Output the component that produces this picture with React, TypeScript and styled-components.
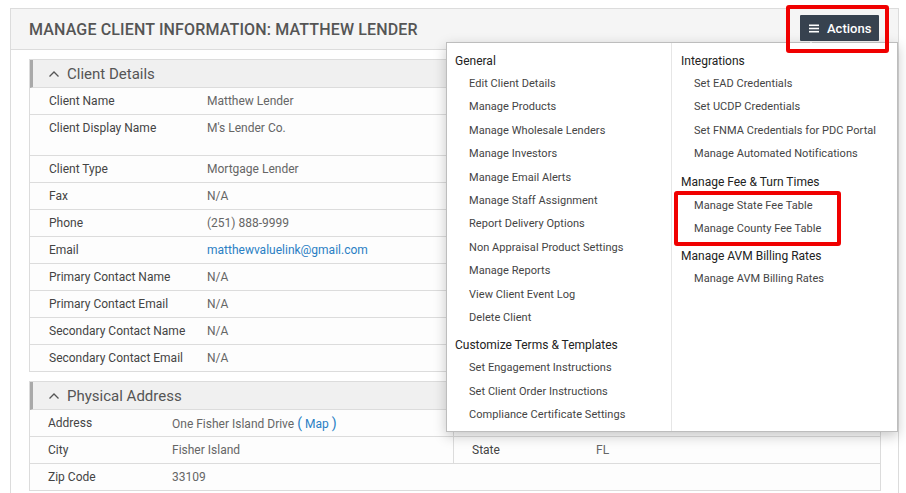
import styled, { createGlobalStyle } from "styled-components";

const GlobalStyle = createGlobalStyle`
  body {
    margin: 0;
    background: #ffffff;
    font-family: Roboto, "Liberation Sans", Arial, sans-serif;
  }
`;

type Field = { label: string; value: string; tall?: boolean; link?: boolean };

const clientFields: Field[] = [
  { label: "Client Name", value: "Matthew Lender" },
  { label: "Client Display Name", value: "M's Lender Co.", tall: true },
  { label: "Client Type", value: "Mortgage Lender" },
  { label: "Fax", value: "N/A" },
  { label: "Phone", value: "(251) 888-9999" },
  { label: "Email", value: "matthewvaluelink@gmail.com", link: true },
  { label: "Primary Contact Name", value: "N/A" },
  { label: "Primary Contact Email", value: "N/A" },
  { label: "Secondary Contact Name", value: "N/A" },
  { label: "Secondary Contact Email", value: "N/A" },
];

type MenuGroup = { title: string; items: string[]; highlight?: boolean };

const leftMenu: MenuGroup[] = [
  {
    title: "General",
    items: [
      "Edit Client Details",
      "Manage Products",
      "Manage Wholesale Lenders",
      "Manage Investors",
      "Manage Email Alerts",
      "Manage Staff Assignment",
      "Report Delivery Options",
      "Non Appraisal Product Settings",
      "Manage Reports",
      "View Client Event Log",
      "Delete Client",
    ],
  },
  {
    title: "Customize Terms & Templates",
    items: [
      "Set Engagement Instructions",
      "Set Client Order Instructions",
      "Compliance Certificate Settings",
    ],
  },
];

const rightMenu: MenuGroup[] = [
  {
    title: "Integrations",
    items: [
      "Set EAD Credentials",
      "Set UCDP Credentials",
      "Set FNMA Credentials for PDC Portal",
      "Manage Automated Notifications",
    ],
  },
  {
    title: "Manage Fee & Turn Times",
    items: ["Manage State Fee Table", "Manage County Fee Table"],
    highlight: true,
  },
  { title: "Manage AVM Billing Rates", items: ["Manage AVM Billing Rates"] },
];

const Chevron = () => (
  <svg width="12" height="8" viewBox="0 0 12 8">
    <polyline points="1.5,6.5 6,2 10.5,6.5" fill="none" stroke="#555" strokeWidth="1.3" />
  </svg>
);

const MenuColumnView = ({ groups, side }: { groups: MenuGroup[]; side: "left" | "right" }) => (
  <MenuColumn side={side}>
    {groups.map((g) => (
      <MenuSection key={g.title}>
        <MenuHeading>{g.title}</MenuHeading>
        {g.highlight ? (
          <Highlight>
            {g.items.map((it) => (
              <MenuItem key={it} side={side}>{it}</MenuItem>
            ))}
          </Highlight>
        ) : (
          g.items.map((it) => <MenuItem key={it} side={side}>{it}</MenuItem>)
        )}
      </MenuSection>
    ))}
  </MenuColumn>
);

export default function App() {
  return (
    <>
      <GlobalStyle />
      <Page>
        <Panel>
          <PanelHeader>
            <Title>Manage Client Information: Matthew Lender</Title>
            <ActionsWrap>
              <ActionsButton>
                <svg width="10" height="9" viewBox="0 0 10 9">
                  <rect x="0" y="0.5" width="10" height="1.6" fill="#fff" />
                  <rect x="0" y="3.7" width="10" height="1.6" fill="#fff" />
                  <rect x="0" y="6.9" width="10" height="1.6" fill="#fff" />
                </svg>
                Actions
              </ActionsButton>
              <Caret />
            </ActionsWrap>
          </PanelHeader>

          <Dropdown>
            <MenuColumnView groups={leftMenu} side="left" />
            <MenuColumnView groups={rightMenu} side="right" />
          </Dropdown>

          <PanelBody>
            <Card>
              <CardHeader>
                <Chevron />
                Client Details
              </CardHeader>
              {clientFields.map((f) => (
                <Row key={f.label} tall={f.tall}>
                  <Label>{f.label}</Label>
                  <Value link={f.link}>{f.value}</Value>
                </Row>
              ))}
            </Card>

            <Card>
              <CardHeader>
                <Chevron />
                Physical Address
              </CardHeader>
              <AddressRow>
                <AddressCell>
                  <AddrLabel>Address</AddrLabel>
                  <Value>
                    One Fisher Island Drive <Paren>(</Paren> <Value link as="span">Map</Value> <Paren>)</Paren>
                  </Value>
                </AddressCell>
                <AddressCell divided />
              </AddressRow>
              <AddressRow>
                <AddressCell>
                  <AddrLabel>City</AddrLabel>
                  <Value>Fisher Island</Value>
                </AddressCell>
                <AddressCell divided>
                  <AddrLabel>State</AddrLabel>
                  <Value>FL</Value>
                </AddressCell>
              </AddressRow>
              <AddressRow>
                <AddressCell>
                  <AddrLabel>Zip Code</AddrLabel>
                  <Value>33109</Value>
                </AddressCell>
                <AddressCell />
              </AddressRow>
            </Card>
          </PanelBody>
        </Panel>
      </Page>
    </>
  );
}

const Page = styled.div`
  padding: 8px 7px 0 10px;
`;

const Panel = styled.div`
  position: relative;
  border: 1px solid #dcdcdc;
  border-bottom: none;
  min-height: 484px;
`;

const PanelHeader = styled.div`
  height: 40px;
  background: #f5f5f5;
  border-bottom: 1px solid #dcdcdc;
  display: flex;
  align-items: center;
  justify-content: space-between;
  padding: 0 19px 0 18px;
`;

const Title = styled.h1`
  margin: 0;
  font-size: 16px;
  font-weight: 500;
  text-transform: uppercase;
  color: #555;
  letter-spacing: 0.15px;
`;

const ActionsWrap = styled.div`
  position: relative;
  margin-top: -2px;
  z-index: 3;

  &::after {
    content: "";
    position: absolute;
    top: -10px;
    left: -14px;
    right: -10px;
    bottom: -12px;
    border: 4px solid #f00000;
    border-radius: 3px;
    pointer-events: none;
  }
`;

const ActionsButton = styled.button`
  display: flex;
  align-items: center;
  gap: 8px;
  height: 26px;
  padding: 0 0 0 9px;
  width: 79px;
  background: #37424f;
  color: #fff;
  border: none;
  border-radius: 1px;
  font-family: Roboto, "Liberation Sans", Arial, sans-serif;
  font-size: 13px;
  font-weight: 500;

  svg {
    flex-shrink: 0;
  }
`;

const Caret = styled.div`
  position: absolute;
  left: 7px;
  bottom: -5px;
  width: 0;
  height: 0;
  border-left: 4px solid transparent;
  border-right: 4px solid transparent;
  border-bottom: 4px solid #fff;
  z-index: 4;
`;

const Dropdown = styled.div`
  position: absolute;
  top: 33px;
  right: 0;
  width: 450px;
  height: 388px;
  background: #fff;
  border: 1px solid #bdbdbd;
  box-shadow: 0 4px 12px rgba(0, 0, 0, 0.22);
  display: grid;
  grid-template-columns: 224px 1fr;
  z-index: 2;
`;

const MenuColumn = styled.div<{ side: "left" | "right" }>`
  padding: ${(p) => (p.side === "left" ? "7px 8px 0 8px" : "7px 8px 0 9px")};
  border-left: ${(p) => (p.side === "right" ? "1px solid #e6e6e6" : "none")};
`;

const MenuSection = styled.div`
  margin-bottom: 5px;
`;

const MenuHeading = styled.div`
  font-size: 12px;
  color: #222;
  height: 22px;
  line-height: 22px;
`;

const MenuItem = styled.div<{ side: "left" | "right" }>`
  font-size: 11px;
  color: #444;
  height: 23.4px;
  line-height: 23.4px;
  padding-left: ${(p) => (p.side === "left" ? "14px" : "13px")};
  letter-spacing: 0.05px;
  white-space: nowrap;
`;

const Highlight = styled.div`
  position: relative;
  margin-top: 1px;
  margin-bottom: 3px;

  &::after {
    content: "";
    position: absolute;
    top: -3px;
    left: -7px;
    width: 167px;
    bottom: -6px;
    border: 4px solid #f00000;
    border-radius: 3px;
    box-sizing: border-box;
  }
`;

const PanelBody = styled.div`
  padding: 9px 17px 0 18px;
  display: flex;
  flex-direction: column;
  gap: 9px;
`;

const Card = styled.div`
  border: 1px solid #dcdcdc;
  background: #fdfdfd;
`;

const CardHeader = styled.div`
  height: 27px;
  background: #f0f0f0;
  border-left: 3px solid #a9a9a9;
  border-bottom: 1px solid #dcdcdc;
  display: flex;
  align-items: center;
  gap: 7px;
  padding-left: 15px;
  font-size: 15px;
  color: #555;
`;

const Row = styled.div<{ tall?: boolean }>`
  display: grid;
  grid-template-columns: 158px 1fr;
  align-items: ${(p) => (p.tall ? "start" : "center")};
  padding: ${(p) => (p.tall ? "6px 0 0 19px" : "0 0 0 19px")};
  border-bottom: 1px solid #dcdcdc;
  height: ${(p) => (p.tall ? "34px" : "26px")};

  &:last-child {
    border-bottom: none;
  }
`;

const Label = styled.div`
  font-size: 12px;
  color: #444;
`;

const Value = styled.div<{ link?: boolean }>`
  font-size: 12px;
  color: ${(p) => (p.link ? "#2a7fc4" : "#666")};
`;

const Paren = styled.span`
  color: #2a7fc4;
  font-size: 14px;
`;

const AddressRow = styled.div`
  display: grid;
  grid-template-columns: 423px 1fr;
  height: 26px;
  border-bottom: 1px solid #dcdcdc;

  &:last-child {
    border-bottom: none;
  }
`;

const AddressCell = styled.div<{ divided?: boolean }>`
  display: grid;
  grid-template-columns: 124px 1fr;
  align-items: center;
  padding-left: 18px;
  border-left: ${(p) => (p.divided ? "1px solid #dcdcdc" : "none")};
`;

const AddrLabel = styled.div`
  font-size: 12px;
  color: #444;
`;
